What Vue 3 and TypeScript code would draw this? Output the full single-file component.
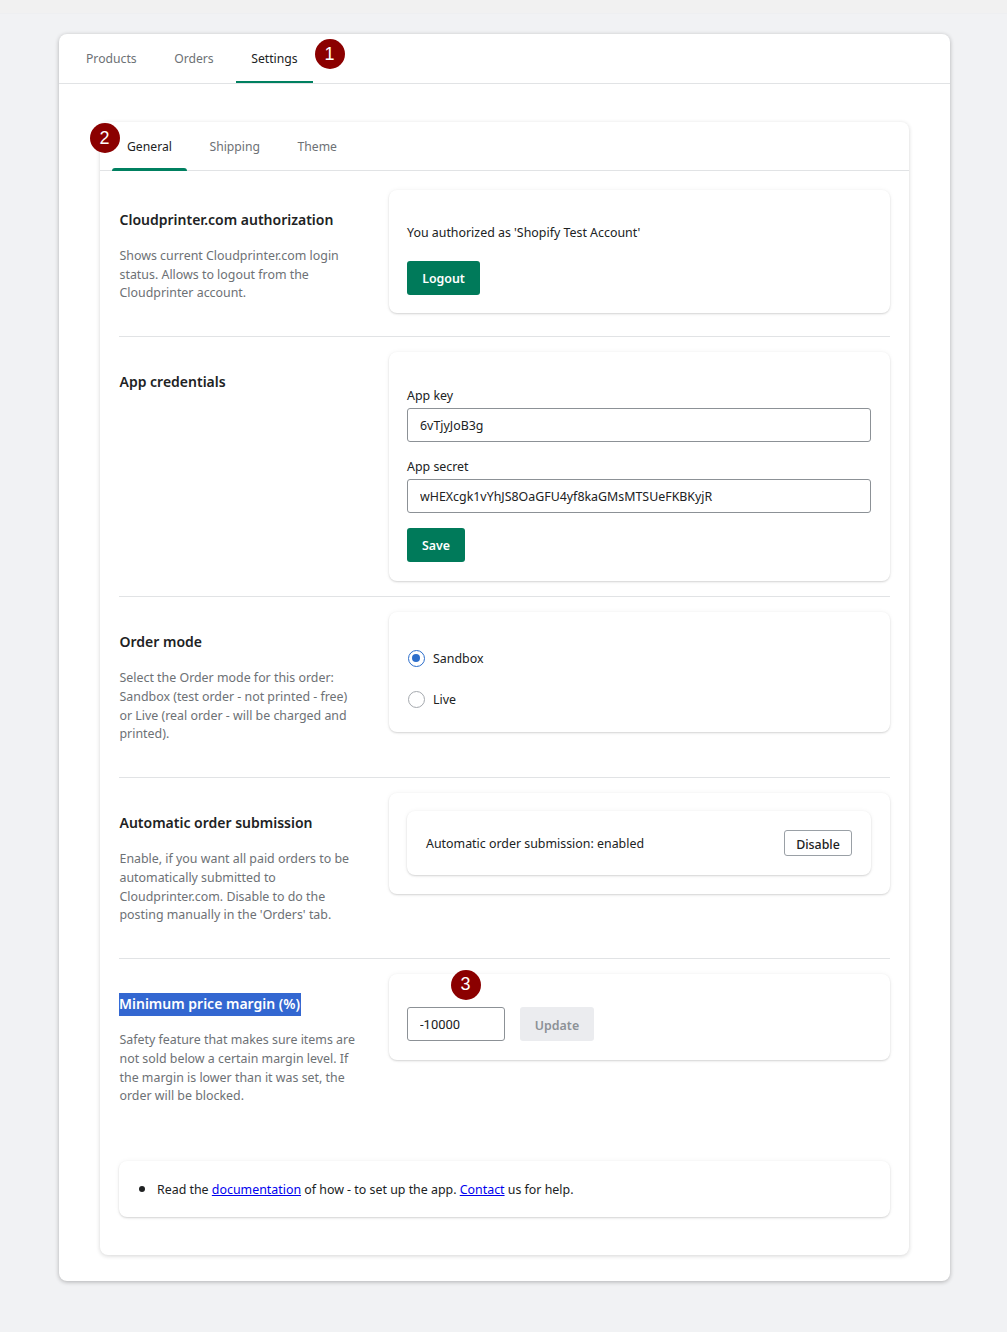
<script setup lang="ts">
interface Tab { label: string; active?: boolean }
const topTabs: Tab[] = [{ label: 'Products' }, { label: 'Orders' }, { label: 'Settings', active: true }]
const subTabs: Tab[] = [{ label: 'General', active: true }, { label: 'Shipping' }, { label: 'Theme' }]
</script>

<template>
  <div class="page">
    <div class="topstrip"></div>
    <main class="outer">
      <nav class="tabs top-tabs">
        <span v-for="t in topTabs" :key="t.label" class="tab" :class="{ active: t.active }">{{ t.label }}</span>
        <span class="badge badge-1">1</span>
      </nav>
      <section class="inner">
        <nav class="tabs sub-tabs">
          <span v-for="t in subTabs" :key="t.label" class="tab" :class="{ active: t.active }">{{ t.label }}</span>
          <span class="badge badge-2">2</span>
        </nav>
        <div class="body">
          <div class="row row-auth">
            <div class="side">
              <h2>Cloudprinter.com authorization</h2>
              <p>Shows current Cloudprinter.com login status. Allows to logout from the Cloudprinter account.</p>
            </div>
            <div class="card auth-card">
              <div class="text">You authorized as 'Shopify Test Account'</div>
              <button class="btn primary logout">Logout</button>
            </div>
          </div>

          <div class="row">
            <div class="side"><h2>App credentials</h2></div>
            <div class="card cred-card">
              <label>App key</label>
              <input class="input" value="6vTjyJoB3g" />
              <label class="second">App secret</label>
              <input class="input" value="wHEXcgk1vYhJS8OaGFU4yf8kaGMsMTSUeFKBKyjR" />
              <button class="btn primary save">Save</button>
            </div>
          </div>

          <div class="row">
            <div class="side">
              <h2>Order mode</h2>
              <p>Select the Order mode for this order: Sandbox (test order - not printed - free) or Live (real order - will be charged and printed).</p>
            </div>
            <div class="card radio-card">
              <div class="radio-row"><span class="radio on"></span><span>Sandbox</span></div>
              <div class="radio-row"><span class="radio"></span><span>Live</span></div>
            </div>
          </div>

          <div class="row">
            <div class="side">
              <h2>Automatic order submission</h2>
              <p>Enable, if you want all paid orders to be automatically submitted to Cloudprinter.com. Disable to do the posting manually in the 'Orders' tab.</p>
            </div>
            <div class="card auto-card">
              <div class="card nested">
                <span class="auto-label">Automatic order submission: enabled</span>
                <button class="btn outline">Disable</button>
              </div>
            </div>
          </div>

          <div class="row last">
            <div class="side">
              <h2><span class="selected">Minimum price margin (%)</span></h2>
              <p>Safety feature that makes sure items are not sold below a certain margin level. If the margin is lower than it was set, the order will be blocked.</p>
            </div>
            <div class="card margin-card">
              <span class="badge badge-3">3</span>
              <input class="input margin-input" value="-10000" />
              <button class="btn disabled">Update</button>
            </div>
          </div>

          <div class="card help">
            <ul>
              <li>Read the <a href="#">documentation</a> of how - to set up the app. <a href="#">Contact</a> us for help.</li>
            </ul>
          </div>
        </div>
      </section>
    </main>
  </div>
</template>

<style>
html, body { margin: 0; background: #f1f2f4; }
</style>

<style scoped>
.page {
  height: 1332px;
  background: #f1f2f4;
  font-family: "Noto Sans", "Open Sans", sans-serif;
  font-size: 12.4px;
  color: #202223;
  overflow: hidden;
}
.topstrip { height: 14px; background: #f1f1f1; border-bottom: 1px solid #eeeff1; box-sizing: border-box; }
.outer {
  margin: 20px 57px 0 59px;
  height: 1247px;
  background: #fff;
  border-radius: 8px;
  box-shadow: 0 1px 4px rgba(23, 24, 24, 0.3);
  padding: 0 41px;
  box-sizing: border-box;
}
.tabs { display: flex; position: relative; border-bottom: 1px solid #e1e3e5; box-sizing: border-box; }
.top-tabs { height: 50px; margin: 0 -41px; padding-left: 12px; }
.sub-tabs { height: 49px; padding-left: 12px; }
.tab {
  display: flex;
  align-items: center;
  justify-content: center;
  padding: 0 15px;
  color: #6d7175;
  font-size: 12.2px;
  position: relative;
  height: 100%;
  margin-right: 7.5px;
}
.tab.active { color: #202223; }
.tab.active::after {
  content: "";
  position: absolute;
  left: 0;
  right: 0;
  bottom: -1px;
  height: 3px;
  background: #008060;
  border-radius: 3px 3px 0 0;
}
.top-tabs .tab.active::after { height: 2px; border-radius: 0; bottom: 0; }
.badge {
  position: absolute;
  width: 30px;
  height: 30px;
  border-radius: 50%;
  background: #8b0000;
  color: #fff;
  font-family: "Liberation Sans", sans-serif;
  font-size: 18px;
  display: flex;
  align-items: center;
  justify-content: center;
  z-index: 2;
}
.badge-1 { left: 255.5px; top: 5px; }
.badge-2 { left: -10.5px; top: 1px; }
.badge-3 { left: 61.5px; top: -4.5px; }
.inner {
  margin-top: 38px;
  height: 1133px;
  background: #fff;
  border-radius: 8px;
  box-shadow: 0 1px 4px rgba(23, 24, 24, 0.18);
}
.body { padding: 19px 19px 0 19px; }
.row {
  display: grid;
  grid-template-columns: 270px 501px;
  padding-bottom: 15px;
  margin-bottom: 15px;
  border-bottom: 1px solid #e1e3e5;
}
.row.last { border-bottom: 0; padding-bottom: 0; margin-bottom: 36.8px; }
.side { padding: 0 29.5px 18.3px 0.5px; box-sizing: border-box; }
h2 {
  margin: 20px 0 0;
  font-size: 14px;
  line-height: 20px;
  font-weight: 600;
  color: #202223;
}
p {
  margin: 17px 0 0;
  color: #6d7175;
  line-height: 18.67px;
}
.selected {
  background: #3367d1;
  color: #fff;
  display: inline-block;
  line-height: 21px;
  margin: -1.5px 0 -1.5px -0.5px;
  padding: 0 1px 2px 0;
  vertical-align: top;
}
.card {
  background: #fff;
  border-radius: 8px;
  box-shadow: 0 0 5px rgba(23, 24, 24, 0.05), 0 1px 2px rgba(0, 0, 0, 0.15);
  box-sizing: border-box;
}
.auth-card { height: 123px; padding: 34px 18px 0; }
.text { line-height: 18px; }
.btn {
  font-family: inherit;
  font-size: 12.4px;
  font-weight: 600;
  border-radius: 3px;
  border: 0;
  height: 34px;
  padding: 0;
  display: block;
}
.primary { background: #007a5a; color: #fff; }
.logout { width: 73px; margin-top: 19px; }
.save { width: 58px; margin-top: 15px; }
.cred-card { height: 229px; padding: 35px 18px 0; }
label { display: block; line-height: 18px; margin-bottom: 3px; }
label.second { margin-top: 16px; }
.input {
  display: block;
  width: 464px;
  height: 34px;
  box-sizing: border-box;
  border: 1px solid #8c9196;
  border-radius: 3px;
  padding: 0 12px;
  font-family: inherit;
  font-size: 12.4px;
  color: #202223;
  background: #fff;
  outline: none;
}
.radio-card { height: 120px; padding: 26px 19px 0; }
.radio-row { display: flex; align-items: center; gap: 8px; height: 41px; }
.radio {
  width: 17px;
  height: 17px;
  box-sizing: border-box;
  border-radius: 50%;
  border: 1px solid #a5a9ae;
  background: #fff;
  position: relative;
}
.radio.on { border: 1.5px solid #2c6ecb; }
.radio.on::after {
  content: "";
  position: absolute;
  left: 3px;
  top: 3px;
  width: 8px;
  height: 8px;
  border-radius: 50%;
  background: #2c6ecb;
}
.auto-card { height: 101px; padding: 18px 19px 0 18px; align-self: start; }
.nested {
  height: 64px;
  display: flex;
  align-items: center;
  justify-content: space-between;
  padding: 0 19px;
}
.auto-label { padding-top: 1px; }
.outline {
  width: 68px;
  height: 26px;
  background: #fff;
  border: 1px solid #9aa0a6;
  color: #202223;
  font-weight: 500;
  padding-top: 3px;
}
.margin-card {
  height: 86px;
  padding: 33px 18px 0;
  display: flex;
  align-items: flex-start;
  gap: 15px;
  position: relative;
}
.margin-input { width: 98px; font-family: "Roboto", sans-serif; font-size: 13px; }
.disabled { width: 74px; background: #ebecef; color: #8c9196; padding-top: 2px; }
.help { height: 56px; display: flex; align-items: center; padding-bottom: 3px; }
ul { margin: 0; padding: 0 0 0 38px; }
li::marker { font-size: 16px; }
a { color: #0000ee; text-decoration: underline; }
.auth-card, .radio-card, .margin-card, .cred-card { align-self: start; }
</style>
